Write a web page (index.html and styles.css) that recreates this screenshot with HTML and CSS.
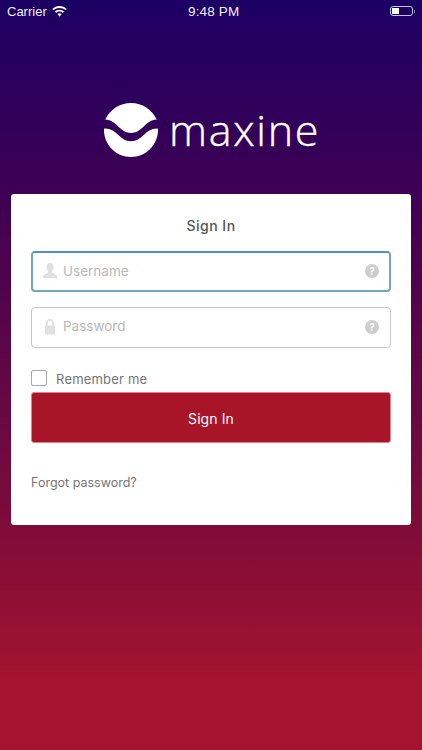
FILE: index.html
```html
<!DOCTYPE html>
<html lang="en">
<head>
    <meta charset="UTF-8">
    <meta name="viewport" content="width=device-width, initial-scale=1.0">
    <title>Maxine - Sign In</title>
    <link rel="stylesheet" href="styles.css">
</head>
<body>

<div class="status-bar">
    <div class="status-left">
        <span>Carrier</span>
        <svg class="wifi" width="15" height="11" viewBox="0 0 15 11">
            <path d="M7.5 0C4.7 0 2.2 1.1.3 2.9l1.3 1.4C3.2 2.9 5.2 2 7.5 2s4.3.9 5.9 2.3l1.3-1.4C12.8 1.1 10.3 0 7.5 0z" fill="#fff"/>
            <path d="M7.5 3.7c-1.8 0-3.4.7-4.6 1.8l1.3 1.4c.9-.8 2-1.3 3.3-1.3s2.4.5 3.3 1.3l1.3-1.4C10.9 4.4 9.3 3.7 7.5 3.7z" fill="#fff"/>
            <path d="M7.5 7.3c-.9 0-1.6.3-2.2.8l2.2 2.5 2.2-2.5c-.6-.5-1.3-.8-2.2-.8z" fill="#fff"/>
        </svg>
    </div>
    <span class="status-time">9:48 PM</span>
    <div class="battery">
        <div class="battery-body"><div class="battery-level"></div></div>
        <div class="battery-cap"></div>
    </div>
</div>

<div class="logo">
    <svg width="56" height="56" viewBox="0 0 56 56">
        <path d="M2.2 17.6C7 7.6 16.7 1 28 1s21 6.6 25.8 16.6C48 17.8 44.5 21 40.5 24.8 36.6 28.4 33 31 28 31s-8.6-2.6-12.500-6.200C11.500 21 8 17.800 2.200 17.600z" fill="#fff"/>
        <path d="M1.100 26.400C8 26.200 11.500 29.400 15.300 33c4 3.700 7.300 6.200 12.700 6.200S36.700 36.700 40.700 33c3.800-3.600 7.300-6.800 14.200-6.600.1.500.1 1.100.1 1.600 0 14.900-12.100 27-27 27S1 42.900 1 28c0-.5 0-1.100.1-1.600z" fill="#fff"/>
    </svg>
    <span class="logo-text">maxine</span>
</div>

<div class="card">
    <h1 class="card-title">Sign In</h1>

    <div class="field field-active">
        <svg class="field-icon" width="16" height="16" viewBox="0 0 16 16">
            <path d="M8 0C5.700 0 4.500 1.700 4.500 4c0 1.800.7 3.400 1.600 4.300v1.400C4.400 10.700 1 11.300 1 13.500V15h14v-1.500c0-2.200-3.400-2.800-5.100-3.800V8.300C10.800 7.400 11.500 5.800 11.500 4 11.500 1.700 10.300 0 8 0z" fill="#e0e0e0"/>
        </svg>
        <span class="field-placeholder">Username</span>
        <span class="help">?</span>
    </div>

    <div class="field">
        <svg class="field-icon" width="16" height="16" viewBox="0 0 16 16">
            <path d="M8 0C5.600 0 4 1.800 4 4.200V6.500H3V15.500H13V6.500H12V4.200C12 1.800 10.400 0 8 0zM8 1.800c1.300 0 2.200 1 2.200 2.500v2.200H5.800V4.300C5.800 2.800 6.700 1.800 8 1.800z" fill="#e0e0e0"/>
        </svg>
        <span class="field-placeholder">Password</span>
        <span class="help">?</span>
    </div>

    <label class="remember">
        <span class="checkbox"></span>
        <span class="remember-text">Remember me</span>
    </label>

    <a href="#" class="btn">Sign In</a>

    <a href="#" class="forgot">Forgot password?</a>
</div>

</body>
</html>
```

FILE: styles.css
```css
body {
    font-family: Inter, "Open Sans", sans-serif;
    margin: 0;
    padding: 0;
    width: 422px;
    height: 750px;
    overflow: hidden;
    background: linear-gradient(#1c0064 0%, #3d0054 25%, #7d0c39 70%, #a5142e 92%);
}
.status-bar {
    height: 20px;
    padding: 2px 7px 0;
    box-sizing: border-box;
    display: flex;
    align-items: center;
    justify-content: space-between;
    position: relative;
    color: #f2eef8;
    font-family: "Liberation Sans", Arial, sans-serif;
    font-size: 13px;
}
.status-left {
    display: flex;
    align-items: center;
    gap: 5px;
}
.status-time {
    position: absolute;
    left: 188px;
    top: 4px;
    font-size: 13.5px;
    letter-spacing: 0.15px;
}
.battery {
    display: flex;
    align-items: center;
}
.battery-body {
    width: 19px;
    height: 6px;
    border: 1px solid #c9c2dc;
    border-radius: 3px;
    padding: 1px;
    display: flex;
}
.battery-level {
    width: 7px;
    background-color: #fff;
}
.battery-cap {
    width: 1px;
    height: 3px;
    margin-left: 1px;
    background-color: #8f84b0;
}
.logo {
    height: 56px;
    margin-top: 82px;
    display: flex;
    align-items: center;
    padding-left: 103px;
}
.logo-text {
    margin-left: 10px;
    font-family: "Open Sans", sans-serif;
    font-weight: 300;
    font-size: 43px;
    letter-spacing: 1.7px;
    -webkit-text-stroke: 0.4px #fff;
    color: #fff;
    line-height: 56px;
}
.card {
    margin: 36px 11px 0;
    height: 331px;
    box-sizing: border-box;
    padding: 22px 20px 0;
    background-color: #fff;
    border-radius: 3px;
}
.card-title {
    margin: 0 0 16px;
    font-size: 14px;
    line-height: 19px;
    font-weight: 500;
    letter-spacing: 0.5px;
    text-align: center;
    color: #555;
}
.field {
    height: 41px;
    box-sizing: border-box;
    margin-bottom: 15px;
    padding: 0 11px 2px 10px;
    display: flex;
    align-items: center;
    border: 1px solid #c8c8c8;
    border-radius: 4px;
}
.field-active {
    border: 2px solid #6ea8c6;
    border-top-color: #4f93bb;
    padding: 0 10px 1px 9px;
}
.field-icon {
    flex: none;
}
.field-placeholder {
    flex: 1;
    margin: 0 0 1px 5px;
    font-size: 13.5px;
    color: #b9b9b9;
}
.help {
    width: 14px;
    height: 14px;
    border-radius: 50%;
    background-color: #cdcdcd;
    color: #fff;
    font-size: 10px;
    font-weight: 700;
    line-height: 14px;
    text-align: center;
}
.remember {
    display: flex;
    align-items: center;
    gap: 9px;
    height: 16px;
    margin-top: 22px;
    font-size: 13px;
    letter-spacing: 0.2px;
    color: #757575;
}
.remember-text {
    margin-top: 2px;
    line-height: 16px;
}
.checkbox {
    width: 16px;
    height: 16px;
    box-sizing: border-box;
    border: 1px solid #a8a8a8;
    border-radius: 2px;
}
.btn {
    display: block;
    height: 51px;
    box-sizing: border-box;
    margin-top: 6px;
    border: 1px solid #d9848f;
    border-radius: 3px;
    background-color: #a81529;
    color: #fff;
    font-size: 14px;
    line-height: 51px;
    letter-spacing: 0.1px;
    text-align: center;
    text-decoration: none;
}
.forgot {
    display: block;
    margin-top: 31px;
    font-size: 12.5px;
    line-height: 17px;
    color: #757575;
    text-decoration: none;
}
```
